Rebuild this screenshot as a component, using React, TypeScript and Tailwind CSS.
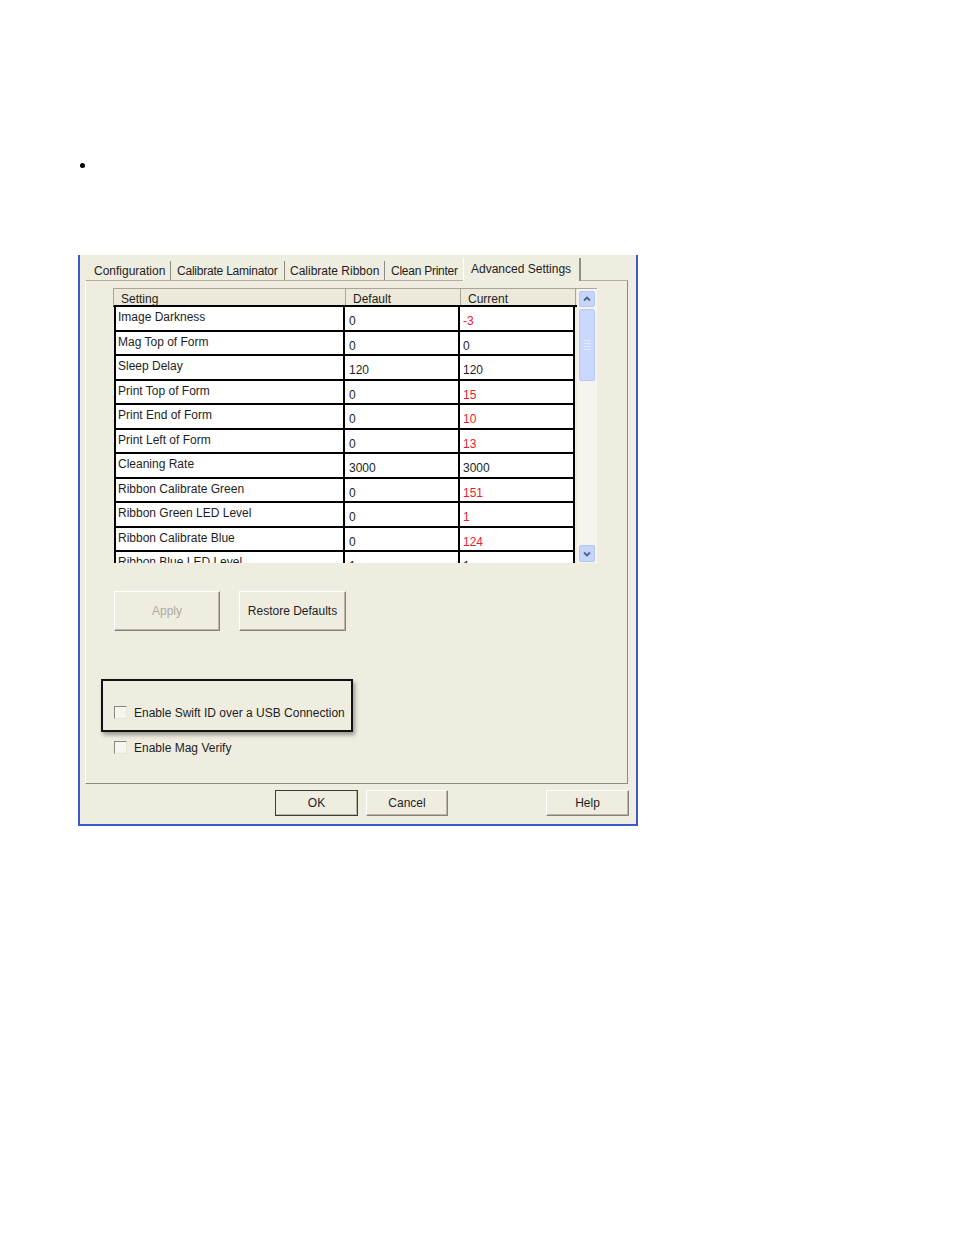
import React from "react";

const rows: { name: string; def: string; cur: string; red?: boolean }[] = [
  { name: "Image Darkness", def: "0", cur: "-3", red: true },
  { name: "Mag Top of Form", def: "0", cur: "0" },
  { name: "Sleep Delay", def: "120", cur: "120" },
  { name: "Print Top of Form", def: "0", cur: "15", red: true },
  { name: "Print End of Form", def: "0", cur: "10", red: true },
  { name: "Print Left of Form", def: "0", cur: "13", red: true },
  { name: "Cleaning Rate", def: "3000", cur: "3000" },
  { name: "Ribbon Calibrate Green", def: "0", cur: "151", red: true },
  { name: "Ribbon Green LED Level", def: "0", cur: "1", red: true },
  { name: "Ribbon Calibrate Blue", def: "0", cur: "124", red: true },
  { name: "Ribbon Blue LED Level", def: "1", cur: "1" },
];

function Checkbox() {
  return (
    <div className="w-[13px] h-[13px] border-t border-l border-[#8a887c] border-r border-b border-r-[#e8e6da] border-b-[#e8e6da] bg-[#f6f5ee] shrink-0" />
  );
}

function Btn({ label, w, h, disabled, def }: { label: string; w: string; h: string; disabled?: boolean; def?: boolean }) {
  return (
    <div
      className={`${w} ${h} flex items-center justify-center border ${
        def ? "border-[#3c3c3c]" : "border-t-white border-l-white border-r-[#85837a] border-b-[#85837a]"
      } bg-[#efece0] shadow-[inset_-1px_-1px_0_#b9b6a8] ${disabled ? "text-[#aeab9f]" : "text-[#1e1e1e]"}`}
    >
      {label}
    </div>
  );
}

export default function App() {
  return (
    <div className="w-[954px] h-[1235px] bg-white font-['Liberation_Sans',Arial,sans-serif] text-[12px] leading-[14px] text-[#1e1e1e]">
      <div className="pl-[80px] pt-[163px]">
        <div className="w-[5px] h-[5px] rounded-full bg-black" />
      </div>

      <div className="ml-[78px] mt-[87px] w-[560px] h-[571px] bg-[#efece0] border-l-2 border-r-2 border-b-2 border-[#3b5bc8] flex flex-col">
        {/* Tabs */}
        <div className="h-[25px] flex items-end pl-[8px] shrink-0 relative z-10">
          <div className="w-[83px] h-[19px] pl-[6px] pt-[3px] border-r border-[#8f8d82]">Configuration</div>
          <div className="w-[114px] h-[19px] pl-[6px] pt-[3px] border-r border-[#8f8d82] tracking-[-0.22px] whitespace-nowrap">Calibrate Laminator</div>
          <div className="w-[100px] h-[19px] pl-[5px] pt-[3px] border-r border-[#8f8d82] whitespace-nowrap">Calibrate Ribbon</div>
          <div className="w-[78px] h-[19px] pl-[6px] pt-[3px] tracking-[-0.25px] whitespace-nowrap">Clean Printer</div>
          <div className="w-[118px] h-[23px] pl-[7px] pt-[4px] border-r-2 border-[#8f8d82] border-l border-l-white bg-[#efece0] -mb-px whitespace-nowrap">
            Advanced Settings
          </div>
        </div>

        {/* Panel */}
        <div className="ml-[5px] w-[543px] h-[504px] border border-t-[#b3b0a3] border-l-white border-r-[#8f8d82] border-b-[#8f8d82] flex flex-col shrink-0">
          {/* Grid */}
          <div className="ml-[27px] mt-[7px] w-[484px] h-[275px] flex overflow-hidden shrink-0 bg-[#efece0]">
            <div className="w-[464px] flex flex-col">
              <div className="h-[19px] flex border-t border-l border-[#a9a699] border-b-2 border-b-black bg-[#ece9da] shrink-0">
                <div className="w-[232px] pl-[7px] pt-[3px] border-r border-[#a9a699]">Setting</div>
                <div className="w-[115px] pl-[7px] pt-[3px] border-r border-[#a9a699]">Default</div>
                <div className="w-[115px] pl-[7px] pt-[3px] border-r border-[#a9a699]">Current</div>
              </div>
              {rows.map((r) => (
                <div key={r.name} className="h-[24.5px] flex shrink-0 pl-[1px]">
                  <div className="w-[461px] flex border-l-2 border-b-2 border-black bg-white">
                    <div className="w-[229px] border-r-2 border-black pl-[2px] pt-[3px] whitespace-nowrap">{r.name}</div>
                    <div className="w-[115px] border-r-2 border-black pl-[4px] pt-[7px]">{r.def}</div>
                    <div className={`w-[115px] border-r-2 border-black pl-[3px] pt-[7px] ${r.red ? "text-[#ec1c2e]" : ""}`}>
                      {r.cur}
                    </div>
                  </div>
                </div>
              ))}
            </div>
            {/* Scrollbar */}
            <div className="w-[20px] h-[275px] bg-[#f5f4ee] flex flex-col items-center pt-[2px] pb-[1px] border-t border-[#a9a699]">
              <div className="w-[16px] h-[16px] rounded-[2px] bg-[#c6d6fb] border border-[#b2c6f3] flex items-center justify-center">
                <svg width="8" height="6" viewBox="0 0 8 6">
                  <path d="M1 4.5 L4 1.5 L7 4.5" fill="none" stroke="#4d6185" strokeWidth="1.8" />
                </svg>
              </div>
              <div className="mt-[2px] w-[16px] h-[72px] rounded-[2px] bg-[#c9d8fc] border border-[#b6c9f4] flex flex-col items-center justify-center gap-[2px]">
                <div className="w-[7px] h-px bg-[#e6edfe]" />
                <div className="w-[7px] h-px bg-[#e6edfe]" />
                <div className="w-[7px] h-px bg-[#e6edfe]" />
                <div className="w-[7px] h-px bg-[#e6edfe]" />
              </div>
              <div className="flex-1" />
              <div className="w-[16px] h-[17px] rounded-[2px] bg-[#c6d6fb] border border-[#b2c6f3] flex items-center justify-center">
                <svg width="8" height="6" viewBox="0 0 8 6">
                  <path d="M1 1.5 L4 4.5 L7 1.5" fill="none" stroke="#4d6185" strokeWidth="1.8" />
                </svg>
              </div>
            </div>
          </div>

          {/* Apply / Restore */}
          <div className="ml-[28px] mt-[28px] flex gap-[19px] shrink-0">
            <Btn label="Apply" w="w-[106px]" h="h-[40px]" disabled />
            <Btn label="Restore Defaults" w="w-[107px]" h="h-[40px]" />
          </div>

          {/* Highlight box */}
          <div className="ml-[15px] mt-[48px] w-[252px] h-[53px] border-2 border-[#111] shadow-[2px_3px_4px_rgba(0,0,0,0.35)] pl-[11px] pt-[25px] flex items-start gap-[7px] shrink-0">
            <Checkbox />
            <span className="whitespace-nowrap">Enable Swift ID over a USB Connection</span>
          </div>

          <div className="ml-[28px] mt-[9px] flex items-start gap-[7px] shrink-0">
            <Checkbox />
            <span>Enable Mag Verify</span>
          </div>
        </div>

        {/* Bottom buttons */}
        <div className="mt-[6px] flex shrink-0">
          <div className="ml-[195px]">
            <Btn label="OK" w="w-[83px]" h="h-[26px]" def />
          </div>
          <div className="ml-[8px]">
            <Btn label="Cancel" w="w-[82px]" h="h-[26px]" />
          </div>
          <div className="ml-[98px]">
            <Btn label="Help" w="w-[83px]" h="h-[26px]" />
          </div>
        </div>
      </div>
    </div>
  );
}
